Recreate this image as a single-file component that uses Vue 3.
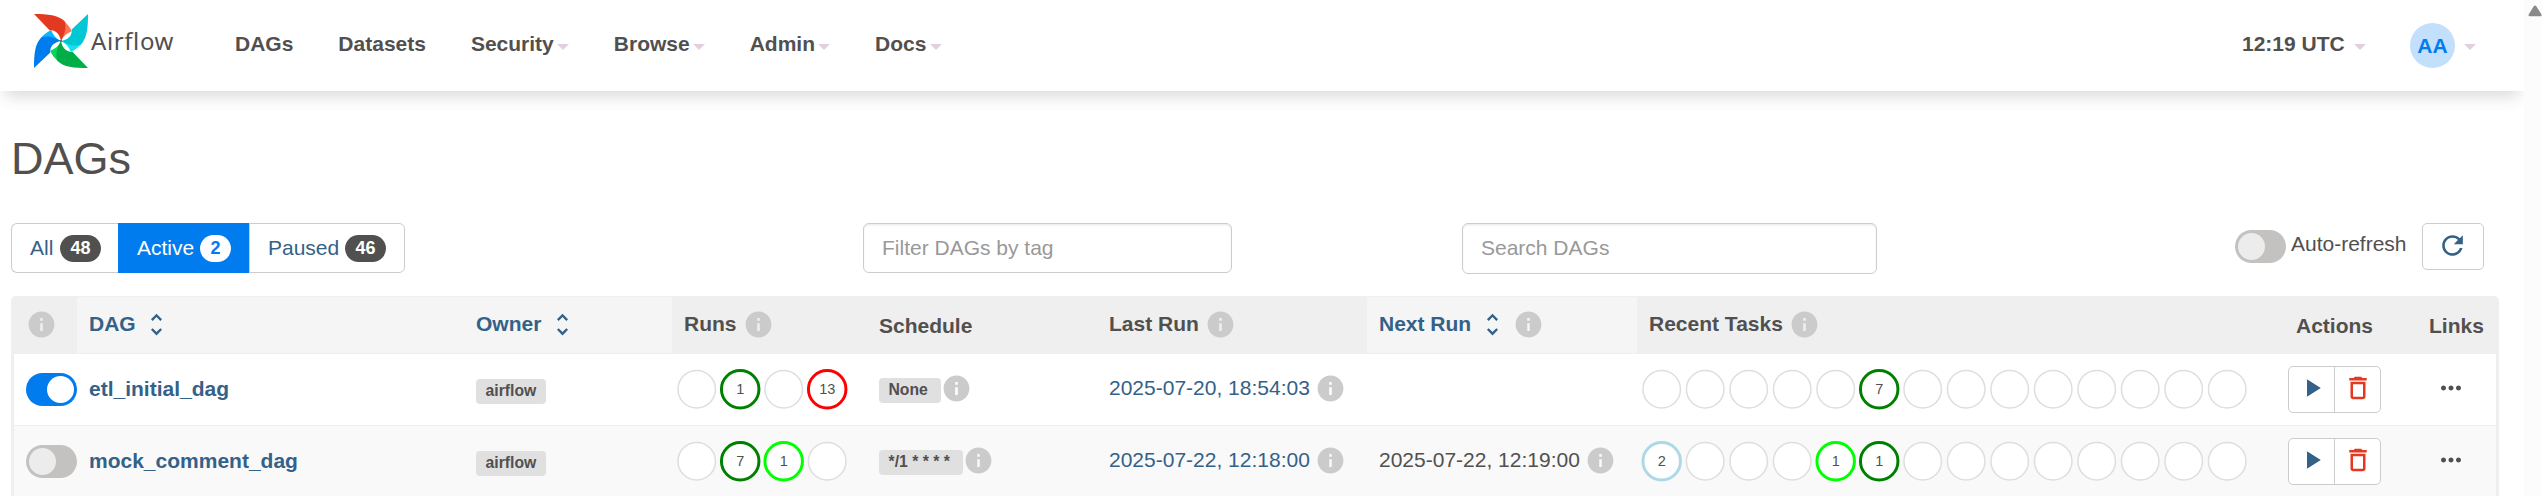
<script setup>
const menu = [
  { label: 'DAGs' },
  { label: 'Datasets' },
  { label: 'Security', caret: true },
  { label: 'Browse', caret: true },
  { label: 'Admin', caret: true },
  { label: 'Docs', caret: true },
]

const filters = [
  { label: 'All', count: 48, cls: 'all' },
  { label: 'Active', count: 2, cls: 'active' },
  { label: 'Paused', count: 46, cls: 'paused' },
]

const columns = [
  { key: 'toggle', info: true },
  { key: 'dag', label: 'DAG', sort: true },
  { key: 'owner', label: 'Owner', sort: true },
  { key: 'runs', label: 'Runs', info: true },
  { key: 'schedule', label: 'Schedule', low: true },
  { key: 'last', label: 'Last Run', info: true },
  { key: 'next', label: 'Next Run', sort: true, info: true },
  { key: 'tasks', label: 'Recent Tasks', info: true },
  { key: 'actions', label: 'Actions', low: true },
  { key: 'links', label: 'Links', low: true },
]

const fill = (size, states) => Array.from({ length: size }, (_, i) => states[i] || {})

const dags = [
  {
    id: 'etl_initial_dag',
    on: true,
    owner: 'airflow',
    runs: fill(4, { 1: { n: 1, c: 'success' }, 3: { n: 13, c: 'failed' } }),
    schedule: 'None',
    last: '2025-07-20, 18:54:03',
    next: '',
    tasks: fill(14, { 5: { n: 7, c: 'success' } }),
  },
  {
    id: 'mock_comment_dag',
    on: false,
    owner: 'airflow',
    runs: fill(4, { 1: { n: 7, c: 'success' }, 2: { n: 1, c: 'running' } }),
    schedule: '*/1 * * * *',
    last: '2025-07-22, 12:18:00',
    next: '2025-07-22, 12:19:00',
    tasks: fill(14, { 0: { n: 2, c: 'none' }, 4: { n: 1, c: 'running' }, 5: { n: 1, c: 'success' } }),
  },
]

const blades = [
  { turn: -90, dark: '#017cee', light: '#0cb6ff' },
  { turn: 180, dark: '#00ad46', light: '#04d659' },
  { turn: 90, dark: '#00c7d4', light: '#11e1ee' },
  { turn: 0, dark: '#e43921', light: '#ff7557' },
]

const infoPath = 'M12 2C6.48 2 2 6.48 2 12s4.48 10 10 10 10-4.48 10-10S17.52 2 12 2zm1 15h-2v-6h2v6zm0-8h-2V7h2v2z'
const sortPath = 'M12 5.83L15.17 9l1.41-1.41L12 3 7.41 7.59 8.83 9 12 5.83zm0 12.34L8.83 15l-1.41 1.41L12 21l4.59-4.59L15.17 15 12 18.17z'
</script>

<template>
  <div class="window">
    <div class="page">
      <nav class="topbar">
        <svg class="logo" width="54" height="54" viewBox="0 0 160 160">
          <g v-for="b in blades" :key="b.turn" :transform="`rotate(${b.turn} 80 80)`">
            <path :fill="b.light" d="M88 19C98 28 108 40 112 51C97 57 86 66 80 80Z" />
            <path :fill="b.dark" d="M0 0C42 0 72 3 90 21C97 40 93 55 80 80C76 62 68 49 50 48Q46 50 44 46Z" />
          </g>
          <circle cx="80" cy="80" r="3" fill="#51504f" />
        </svg>
        <span class="brand">Airflow</span>
        <div class="menu">
          <span v-for="m in menu" :key="m.label" class="item">{{ m.label }}<i v-if="m.caret" class="caret"></i></span>
        </div>
        <span class="clock">12:19 UTC<i class="caret"></i></span>
        <span class="user"><span class="avatar">AA</span><i class="caret"></i></span>
      </nav>

      <h1>DAGs</h1>

      <div class="toolbar">
        <div class="filters">
          <a v-for="f in filters" :key="f.label" class="filter" :class="f.cls">{{ f.label }}<b class="badge">{{ f.count }}</b></a>
        </div>
        <div class="field tags">Filter DAGs by tag</div>
        <div class="field search">Search DAGs</div>
        <div class="auto"><span class="switch"></span><span class="auto-label">Auto-refresh</span></div>
        <div class="refresh">
          <svg width="31" height="31" viewBox="0 0 24 24"><path fill="#346187" d="M17.65 6.35C16.2 4.9 14.21 4 12 4c-4.42 0-7.99 3.58-7.99 8s3.57 8 7.99 8c3.73 0 6.84-2.55 7.73-6h-2.08c-.82 2.33-3.04 4-5.65 4-3.31 0-6-2.69-6-6s2.69-6 6-6c1.66 0 3.14.69 4.22 1.78L13 11h7V4l-2.35 2.35z" /></svg>
        </div>
      </div>

      <div class="table">
        <div class="row head">
          <div v-for="c in columns" :key="c.key" class="th" :class="[c.key, { sortable: c.sort, low: c.low }]">
            <span v-if="c.label">{{ c.label }}</span>
            <svg v-if="c.sort" class="sort" width="29" height="29" viewBox="0 0 24 24"><path :d="sortPath" /></svg>
            <svg v-if="c.info" class="info" width="31" height="31" viewBox="0 0 24 24"><path :d="infoPath" /></svg>
          </div>
        </div>
        <div v-for="d in dags" :key="d.id" class="row body">
          <div class="td toggle"><span class="switch" :class="{ on: d.on }"></span></div>
          <div class="td dag">{{ d.id }}</div>
          <div class="td owner"><span class="label">{{ d.owner }}</span></div>
          <div class="td runs">
            <svg width="174" height="42">
              <g v-for="(r, i) in d.runs" :key="i" :transform="`translate(${21.7 + i * 43.5} 21.2)`">
                <circle r="18.75" :class="['dot', r.c]" />
                <text v-if="r.n" y="4.3" text-anchor="middle">{{ r.n }}</text>
              </g>
            </svg>
          </div>
          <div class="td schedule">
            <span class="label">{{ d.schedule }}</span>
            <svg class="info" width="31" height="31" viewBox="0 0 24 24"><path :d="infoPath" /></svg>
          </div>
          <div class="td last">
            <span>{{ d.last }}</span>
            <svg class="info" width="31" height="31" viewBox="0 0 24 24"><path :d="infoPath" /></svg>
          </div>
          <div class="td next">
            <template v-if="d.next">
              <span>{{ d.next }}</span>
              <svg class="info" width="31" height="31" viewBox="0 0 24 24"><path :d="infoPath" /></svg>
            </template>
          </div>
          <div class="td tasks">
            <svg width="610" height="42">
              <g v-for="(r, i) in d.tasks" :key="i" :transform="`translate(${21.7 + i * 43.5} 21.2)`">
                <circle r="18.75" :class="['dot', r.c]" />
                <text v-if="r.n" y="4.3" text-anchor="middle">{{ r.n }}</text>
              </g>
            </svg>
          </div>
          <div class="td actions">
            <div class="btns">
              <span class="btn"><svg width="30" height="30" viewBox="0 0 24 24"><path fill="#346187" d="M8 5v14l11-7z" /></svg></span>
              <span class="btn"><svg width="30" height="30" viewBox="0 0 24 24"><path fill="#e43921" d="M16 9v10H8V9h8m-1.5-6h-5l-1 1H5v2h14V4h-3.5l-1-1zM18 7H6v12c0 1.1.9 2 2 2h8c1.1 0 2-.9 2-2V7z" /></svg></span>
            </div>
          </div>
          <div class="td links">
            <svg width="30" height="30" viewBox="0 0 24 24"><path fill="#51504f" d="M6 10c-1.1 0-2 .9-2 2s.9 2 2 2 2-.9 2-2-.9-2-2-2zm12 0c-1.1 0-2 .9-2 2s.9 2 2 2 2-.9 2-2-.9-2-2-2zm-6 0c-1.1 0-2 .9-2 2s.9 2 2 2 2-.9 2-2-.9-2-2-2z" /></svg>
          </div>
        </div>
      </div>
    </div>
    <div class="scrollbar">
      <svg width="14" height="12" viewBox="0 0 14 12"><path fill="#8a8a8a" d="M1.6 11.2Q-.2 11 .8 9.3L5.6 1.5Q7 -.3 8.4 1.5L13.4 9.3Q14.2 11 12.5 11.2Z" /></svg>
    </div>
  </div>
</template>

<style>
html,
body {
  margin: 0;
  background: #fff;
  overflow: hidden;
}
</style>

<style scoped>
.window {
  display: flex;
  width: 2542px;
  height: 496px;
  overflow: hidden;
  font-family: 'Liberation Sans', Arial, sans-serif;
  font-size: 21px;
  line-height: 30px;
  color: #51504f;
  background: #fff;
}
.window * {
  box-sizing: border-box;
}
svg {
  display: block;
  flex: none;
}
.page {
  width: 2524px;
  height: 496px;
  overflow: hidden;
}
.scrollbar {
  width: 18px;
  padding: 5px 0 0 4px;
  background: #fcfcfc;
}
.topbar {
  display: flex;
  align-items: flex-start;
  height: 91px;
  background: #fff;
  box-shadow: 0 10px 15px -5px rgba(0, 0, 0, 0.13), 0 5px 25px rgba(0, 0, 0, 0.03);
}
.logo {
  margin: 14px 3px 0 34px;
}
.brand {
  width: 144px;
  padding-top: 26px;
  font-family: 'Noto Sans', sans-serif;
  font-size: 24px;
  letter-spacing: 0.6px;
}
.menu {
  display: flex;
  gap: 45px;
  flex: 1;
}
.item,
.clock,
.user {
  display: flex;
  align-items: center;
  height: 88px;
  font-weight: bold;
}
.caret {
  width: 0;
  height: 0;
  margin: 5px -0.5px 0 3.5px;
  border: 6px solid transparent;
  border-top: 6px solid #e2cfe0;
  border-bottom: 0;
}
.clock {
  width: 168px;
}
.clock .caret {
  margin-left: 9px;
}
.user {
  width: 114px;
}
.avatar {
  width: 45px;
  height: 45px;
  margin-top: 3px;
  border-radius: 50%;
  background: #c2dffb;
  color: #017cee;
  line-height: 46px;
  text-align: center;
}
.user .caret {
  margin-left: 9px;
}
h1 {
  height: 50px;
  margin: 43px 0 39px 11px;
  font-size: 45px;
  font-weight: normal;
  line-height: 50px;
}
.toolbar {
  display: flex;
  align-items: flex-start;
  height: 73px;
  padding-left: 11px;
}
.filters {
  display: flex;
  width: 394px;
  height: 50px;
  color: #346187;
}
.filter {
  display: flex;
  align-items: center;
  justify-content: space-between;
  border: 1px solid #ccc;
}
.filter.all {
  width: 107px;
  padding: 0 17px 0 18px;
  border-right: 0;
  border-radius: 6px 0 0 6px;
}
.filter.active {
  width: 131px;
  padding: 0 17px 0 18px;
  border-color: #017cee;
  background: #017cee;
  color: #fff;
}
.filter.paused {
  width: 156px;
  padding: 0 18px 0 18px;
  border-radius: 0 6px 6px 0;
}
.badge {
  width: 41px;
  height: 27px;
  border-radius: 14px;
  background: #51504f;
  color: #fff;
  font-size: 18px;
  line-height: 26px;
  text-align: center;
}
.active .badge {
  width: 31px;
  background: #fff;
  color: #017cee;
}
.field {
  height: 50px;
  padding-left: 18px;
  border: 1px solid #ccc;
  border-radius: 6px;
  box-shadow: inset 0 1.5px 1.5px rgba(0, 0, 0, 0.075);
  color: #999;
  line-height: 48px;
}
.tags {
  width: 369px;
  margin-left: 458px;
}
.search {
  width: 415px;
  height: 51px;
  margin-left: 230px;
}
.auto {
  display: flex;
  width: 187px;
  margin-left: 358px;
  padding-top: 7px;
}
.auto-label {
  margin-left: 5px;
  line-height: 28px;
}
.switch {
  display: block;
  flex: none;
  width: 51px;
  height: 33px;
  padding: 3px;
  border-radius: 17px;
  background: #c4c2c1;
}
.switch::after {
  content: '';
  display: block;
  width: 27px;
  height: 27px;
  border-radius: 50%;
  background: #edecec;
}
.switch.on {
  background: #017cee;
}
.switch.on::after {
  margin-left: auto;
  background: #fff;
}
.refresh {
  width: 62px;
  height: 47px;
  padding: 6px 0 0 14px;
  border: 1px solid #ccc;
  border-radius: 5px;
}
.table {
  width: 2488px;
  height: 220px;
  margin-left: 11px;
  border: 3px solid #efefef;
  border-top: 0;
  border-bottom: 0;
  border-radius: 5px 5px 0 0;
}
.row {
  display: grid;
  grid-template-columns: 63px 387px 208px 195px 230px 270px 270px 637px 120px 102px;
}
.head {
  height: 58px;
  background: #efefef;
  font-weight: bold;
}
.th {
  display: flex;
  align-items: center;
  height: 58px;
  padding: 0 0 2px 12px;
}
.th.sortable {
  border: 1px solid #efefef;
  border-width: 1px 0;
  background: #f5f5f5;
  color: #346187;
}
.th.low {
  padding: 2px 0 0 12px;
}
.th.actions {
  padding-left: 22px;
}
.th.links {
  padding-left: 35px;
}
.th .info {
  margin-left: 6px;
}
.th.toggle .info {
  margin-left: 0;
}
.sort {
  margin-left: 7px;
  fill: #346187;
}
.th.dag .sort {
  margin-left: 6px;
}
.info {
  fill: #cbcbcb;
}
.body {
  height: 72px;
  border-bottom: 1px solid #eee;
}
.body:nth-child(odd) {
  background: #f9f9f9;
}
.td {
  display: flex;
  align-items: center;
  height: 68px;
  padding-left: 12px;
}
.td.dag {
  height: 69px;
  font-weight: bold;
  color: #346187;
}
.td.toggle,
.td.actions {
  height: 71px;
}
.td.actions {
  padding-left: 14px;
}
.td.runs,
.td.tasks {
  height: 69px;
  padding-left: 3px;
}
.td.last {
  color: #346187;
}
.td.last .info,
.td.next .info {
  margin-left: 5px;
}
.label {
  height: 25px;
  padding: 0 9.5px;
  border-radius: 4px;
  background: #e0e0e0;
  color: #51504f;
  font-size: 15.75px;
  font-weight: bold;
  line-height: 23px;
}
.owner .label {
  margin-top: 6px;
}
.schedule .label {
  margin-top: 5px;
  padding-right: 13.5px;
}
.schedule .info {
  margin-left: -0.5px;
}
.dot {
  fill: #fff;
  stroke: #dedede;
  stroke-width: 1.5;
}
.dot.success {
  stroke: #008000;
  stroke-width: 3;
}
.dot.failed {
  stroke: #f00;
  stroke-width: 3;
}
.dot.running {
  stroke: #0f0;
  stroke-width: 3;
}
.dot.none {
  stroke: #add8e6;
  stroke-width: 3;
}
text {
  fill: #51504f;
  font-size: 14.5px;
}
.btns {
  display: flex;
  width: 93px;
  height: 47px;
  border: 1px solid #ccc;
  border-radius: 5px;
  background: #fff;
}
.btn {
  flex: 1;
  padding: 6px 0 0 8px;
}
.btn + .btn {
  border-left: 1px solid #ccc;
}
.td.links {
  padding-left: 42px;
}
</style>
